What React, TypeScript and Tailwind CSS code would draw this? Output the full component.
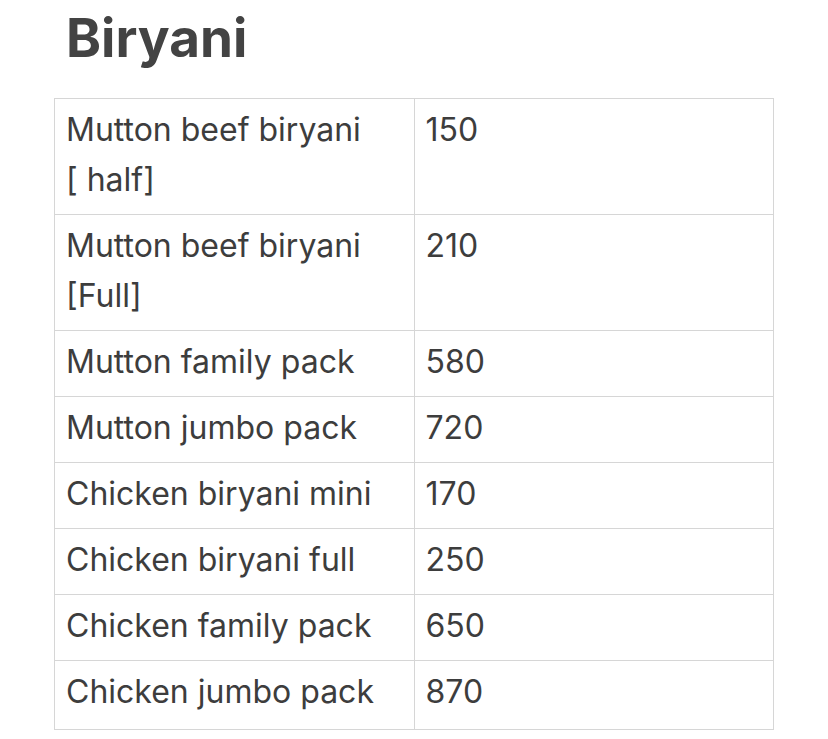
import React from 'react';

interface MenuItem {
  name: string;
  price: number;
}

const items: MenuItem[] = [
  { name: 'Mutton beef biryani [\u00a0half]', price: 150 },
  { name: 'Mutton beef biryani [Full]', price: 210 },
  { name: 'Mutton family pack', price: 580 },
  { name: 'Mutton jumbo pack', price: 720 },
  { name: 'Chicken biryani mini', price: 170 },
  { name: 'Chicken biryani full', price: 250 },
  { name: 'Chicken family pack', price: 650 },
  { name: 'Chicken jumbo pack', price: 870 },
];

const App: React.FC = () => {
  return (
    <div
      className="min-h-screen bg-white px-[54px] text-[#3d3d3d]"
      style={{ fontFamily: 'Inter, "Noto Sans", sans-serif' }}
    >
      <h1 className="pl-3 pt-[6px] text-[53px] font-bold leading-[64px] text-[#434343]">
        Biryani
      </h1>
      <table className="mt-[28px] w-[720px] table-fixed border-collapse">
        <tbody>
          {items.map((item) => (
            <tr key={item.name} className="last:[&>td]:pb-[12px]">
              <td className="border border-[#d6d6d6] px-[11px] pt-[6px] pb-[9px] align-top text-[32px] leading-[50px]">
                {item.name}
              </td>
              <td className="border border-[#d6d6d6] px-[11px] pt-[6px] pb-[9px] align-top text-[32px] leading-[50px]">
                {item.price}
              </td>
            </tr>
          ))}
        </tbody>
      </table>
    </div>
  );
};

export default App;
